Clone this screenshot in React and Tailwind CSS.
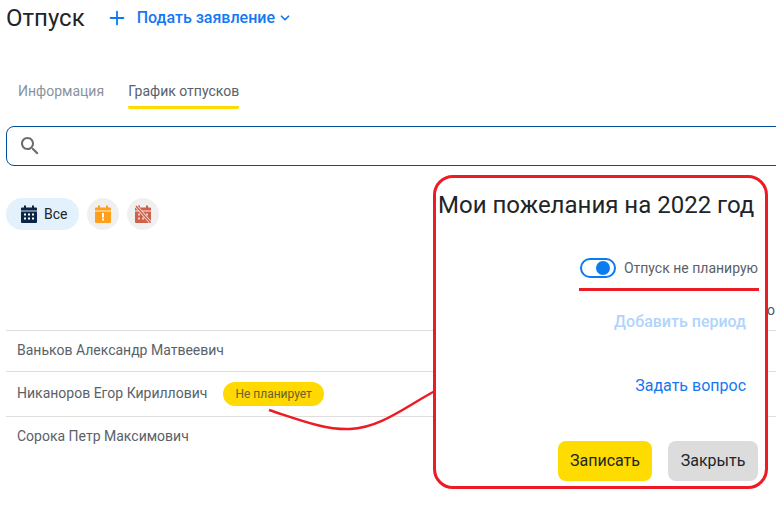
import { Plus, ChevronDown } from 'lucide-react'

const people = [
  { name: 'Ваньков Александр Матвеевич', h: 'h-[41px]' },
  { name: 'Никаноров Егор Кириллович', h: 'h-[45px]', badge: 'Не планирует' },
  { name: 'Сорока Петр Максимович', h: 'h-[41px]' }
]

function CalendarIcon({ color, mark }) {
  return (
    <svg width="18" height="18" viewBox="0 0 18 18">
      <rect x="4" y="0.5" width="2" height="3.5" fill={color} />
      <rect x="12" y="0.5" width="2" height="3.5" fill={color} />
      <path d="M2 2.5h14a1 1 0 0 1 1 1V17a1 1 0 0 1-1 1H2a1 1 0 0 1-1-1V3.500a1 1 0 0 1 1-1z" fill={color} />
      <rect x="1" y="5.5" width="16" height="1" fill="#fff" opacity="0.85" />
      {mark === 'grid' && (
        <g fill="#fff">
          <rect x="4" y="8.500" width="2" height="2" />
          <rect x="8" y="8.500" width="2" height="2" />
          <rect x="12" y="8.500" width="2" height="2" />
          <rect x="4" y="12.500" width="2" height="2" />
          <rect x="8" y="12.500" width="2" height="2" />
          <rect x="12" y="12.500" width="2" height="2" />
        </g>
      )}
      {mark === 'alert' && (
        <g fill="#fff">
          <rect x="8" y="8" width="2" height="4.500" />
          <rect x="8" y="13.500" width="2" height="2" />
        </g>
      )}
      {mark === 'off' && (
        <g>
          <g fill="#fff" opacity="0.7">
            <rect x="4" y="8.500" width="2" height="2" />
            <rect x="12" y="8.500" width="2" height="2" />
            <rect x="4" y="12.500" width="2" height="2" />
            <rect x="8" y="12.500" width="2" height="2" />
          </g>
          <path d="M2 1l14 16" stroke="#f0f0f0" strokeWidth="3" />
          <path d="M2 1l14 16" stroke={color} strokeWidth="1.500" />
        </g>
      )}
    </svg>
  )
}

export default function App() {
  return (
    <div className="relative w-[776px] h-[507px] overflow-hidden bg-white font-['Roboto',sans-serif] text-[#212529]">
      <div className="flex items-center h-9 pl-[6px]">
        <h1 className="text-2xl font-normal">Отпуск</h1>
        <Plus className="ml-[21px] text-[#0a7cf0]" size={22} strokeWidth={2} />
        <span className="ml-[9px] text-base font-medium text-[#1677f2]">Подать заявление</span>
        <ChevronDown className="ml-[3px] text-[#1677f2]" size={14} strokeWidth={3} />
      </div>

      <div className="flex gap-6 pl-[18px] mt-[44px] text-sm">
        <div className="h-[29px] pt-[1px] text-[#8a939c]">Информация</div>
        <div className="h-[29px] pt-[1px] border-b-[3px] border-[#ffdc00] rounded-b-[2px] text-[#5a6168]">График отпусков</div>
      </div>

      <div className="flex items-center w-[800px] h-10 ml-[6px] mt-[17px] pl-[11px] border border-[#00509e] rounded-lg">
        <svg className="text-[#6b6b6b]" width="24" height="24" viewBox="0 0 24 24" fill="currentColor">
          <path d="M15.5 14h-.79l-.28-.27C15.41 12.59 16 11.11 16 9.500 16 5.910 13.090 3 9.500 3S3 5.910 3 9.500 5.910 16 9.500 16c1.610 0 3.090-.59 4.230-1.570l.27.28v.79l5 4.990L20.490 19l-4.990-5zm-6 0C7.010 14 5 11.990 5 9.500S7.010 5 9.500 5 14 7.010 14 9.500 11.990 14 9.500 14z" />
        </svg>
      </div>

      <div className="flex gap-2 ml-[6px] mt-8">
        <div className="flex items-center gap-[6px] w-[73px] h-8 pl-[14px] rounded-2xl bg-[#e3f1fd] text-sm">
          <CalendarIcon color="#0b2545" mark="grid" />
          <span>Все</span>
        </div>
        <div className="flex items-center justify-center w-8 h-8 rounded-full bg-[#f0f0f0]">
          <CalendarIcon color="#ff9f1c" mark="alert" />
        </div>
        <div className="flex items-center justify-center w-8 h-8 rounded-full bg-[#f0f0f0]">
          <CalendarIcon color="#d0604a" mark="off" />
        </div>
      </div>

      <div className="ml-[6px] mt-[100px] w-[800px]">
        {people.map(p => (
          <div key={p.name} className={`flex items-center pl-[11px] pb-[2px] border-t border-[#dedede] text-sm text-[#5a6168] ${p.h}`}>
            <span>{p.name}</span>
            {p.badge && (
              <span className="flex items-center h-6 mt-[2px] ml-4 px-3 rounded-xl bg-[#ffd900] text-xs text-[#6b6030]">{p.badge}</span>
            )}
          </div>
        ))}
      </div>

      <span className="absolute left-[767px] top-[300px] text-sm text-[#4f5760]">о</span>

      <svg className="absolute left-[260px] top-[385px]" width="180" height="50" viewBox="0 0 180 50" fill="none">
        <path d="M9 25C40 35 65 45 90 44c30-1 55-22 85-38" stroke="#ed1c24" strokeWidth="2.500" />
      </svg>

      <div className="absolute left-[433px] top-[175px] flex flex-col w-[335px] h-[314px] bg-white border-[3px] border-[#ed1c24] rounded-[20px]">
        <h2 className="ml-[2px] mt-[11px] text-2xl font-normal whitespace-nowrap">Мои пожелания на 2022 год</h2>
        <div className="flex items-center self-end gap-2 mt-[37px] mr-[7px] text-sm text-[#5a6168]">
          <div className="flex items-center justify-end w-9 h-[20px] pr-[4px] rounded-full border-2 border-[#0a7cf0]">
            <div className="w-[14px] h-[14px] rounded-full bg-[#0a7cf0]" />
          </div>
          <span>Отпуск не планирую</span>
        </div>
        <div className="self-end w-[180px] h-[3px] mt-[10px] mr-[6px] bg-[#ed1c24]" />
        <div className="self-end mt-[19px] mr-[19px] text-base font-medium text-[#b0d4fb]">Добавить период</div>
        <div className="self-end mt-[40px] mr-[19px] text-base text-[#1677f2]">Задать вопрос</div>
        <div className="flex justify-end gap-4 mt-[43px] mr-[7px] text-base">
          <button className="w-[94px] h-10 rounded-lg bg-[#ffdc00]">Записать</button>
          <button className="w-[90px] h-10 rounded-lg bg-[#dcdcdc]">Закрыть</button>
        </div>
      </div>
    </div>
  )
}
